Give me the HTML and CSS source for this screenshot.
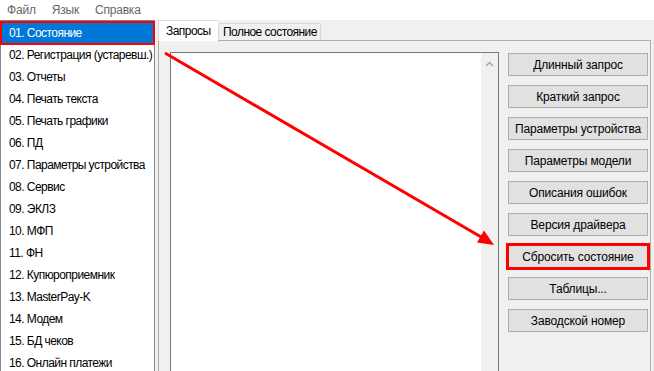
FILE: index.html
```html
<!DOCTYPE html>
<html lang="ru">
<head>
    <meta charset="UTF-8">
    <title>Тест драйвера ФР</title>
    <link rel="stylesheet" href="styles.css">
</head>
<body>

    <div class="menubar">
        <span>Файл</span>
        <span>Язык</span>
        <span>Справка</span>
    </div>

    <div class="main">
        <ul class="pages">
            <li class="selected">01. Состояние</li>
            <li>02. Регистрация (устаревш.)</li>
            <li>03. Отчеты</li>
            <li>04. Печать текста</li>
            <li>05. Печать графики</li>
            <li>06. ПД</li>
            <li>07. Параметры устройства</li>
            <li>08. Сервис</li>
            <li>09. ЭКЛЗ</li>
            <li>10. МФП</li>
            <li>11. ФН</li>
            <li>12. Купюроприемник</li>
            <li>13. MasterPay-K</li>
            <li>14. Модем</li>
            <li>15. БД чеков</li>
            <li>16. Онлайн платежи</li>
        </ul>

        <div class="tabs">
            <div class="tab-strip">
                <div class="tab active">Запросы</div>
                <div class="tab">Полное состояние</div>
            </div>
            <div class="tab-page">
                <div class="memo">
                    <div class="memo-text"></div>
                    <div class="scrollbar">
                        <svg width="9" height="6" viewBox="0 0 9 6">
                            <path d="M1 5 L4.5 1.5 L8 5" fill="none" stroke="#a6a6a6" stroke-width="1.5"/>
                        </svg>
                    </div>
                </div>
                <div class="buttons">
                    <button>Длинный запрос</button>
                    <button>Краткий запрос</button>
                    <button>Параметры устройства</button>
                    <button>Параметры модели</button>
                    <button>Описания ошибок</button>
                    <button>Версия драйвера</button>
                    <button class="marked">Сбросить состояние</button>
                    <button>Таблицы...</button>
                    <button>Заводской номер</button>
                </div>
            </div>
        </div>
    </div>

    <!-- стрелка-пометка поверх окна -->
    <svg class="arrow" width="654" height="371" viewBox="0 0 654 371">
        <line x1="165" y1="53" x2="482" y2="237.5" stroke="#ff0000" stroke-width="3"/>
        <polygon points="494,245 477,242.5 484,230.5" fill="#ff0000"/>
    </svg>

</body>
</html>
```

FILE: styles.css
```css
body {
    margin: 0;
    height: 371px;
    overflow: hidden;
    font-family: "Liberation Sans", Arial, sans-serif;
    font-size: 12px;
    letter-spacing: -0.55px;
    background-color: #f0f0f0;
    position: relative;
}
.menubar {
    height: 20px;
    background-color: #fff;
    display: flex;
    gap: 16px;
    padding-left: 7px;
    align-items: center;
    color: #666;
    letter-spacing: -0.2px;
}
.main {
    display: flex;
    height: 351px;
}
.pages {
    list-style: none;
    margin: 0;
    padding: 1px 0 0 0;
    width: 153px;
    border: 1px solid #828790;
    border-bottom: none;
    background-color: #fff;
    flex-shrink: 0;
}
.pages li {
    height: 22px;
    line-height: 22px;
    padding-left: 8px;
    white-space: nowrap;
    overflow: hidden;
    color: #000;
}
.pages li.selected {
    background-color: #0078d7;
    color: #fff;
    outline: 2px solid #ff0000;
    outline-offset: -1px;
    overflow: visible;
}
.tabs {
    margin-left: 3px;
    width: 493px;
    display: flex;
    flex-direction: column;
}
.tab-strip {
    height: 20px;
    display: flex;
    align-items: flex-end;
}
.tab {
    box-sizing: border-box;
    width: 103px;
    height: 17px;
    line-height: 17px;
    padding-left: 4px;
    border: 1px solid #d9d9d9;
    border-bottom: none;
    background-color: #f0f0f0;
    white-space: nowrap;
}
.tab.active {
    width: 60px;
    height: 21px;
    line-height: 21px;
    margin-bottom: -1px;
    padding-left: 7px;
    background-color: #fff;
    border-right: none;
    position: relative;
    z-index: 1;
}
.tab-page {
    flex: 1;
    border: 1px solid #adadad;
    border-bottom: none;
    background-color: #f0f0f0;
    padding: 11px 2px 0 11px;
    display: flex;
    gap: 9px;
}
.memo {
    width: 327px;
    border: 1px solid #7a7a7a;
    border-bottom: none;
    background-color: #fff;
    display: flex;
}
.memo-text {
    flex: 1;
}
.scrollbar {
    width: 17px;
    background-color: #f0f0f0;
    display: flex;
    justify-content: center;
    padding-top: 8px;
    box-sizing: border-box;
}
.buttons {
    display: flex;
    flex-direction: column;
    gap: 9px;
    padding-top: 1px;
}
.buttons button {
    width: 140px;
    height: 23px;
    padding: 0;
    font-family: "Liberation Sans", Arial, sans-serif;
    font-size: 12px;
    letter-spacing: -0.15px;
    white-space: nowrap;
    color: #000;
    background-color: #e1e1e1;
    border: 1px solid #adadad;
}
.buttons button.marked {
    outline: 3px solid #ff0000;
    outline-offset: -1px;
}
.arrow {
    position: absolute;
    left: 0;
    top: 0;
    pointer-events: none;
}
```
